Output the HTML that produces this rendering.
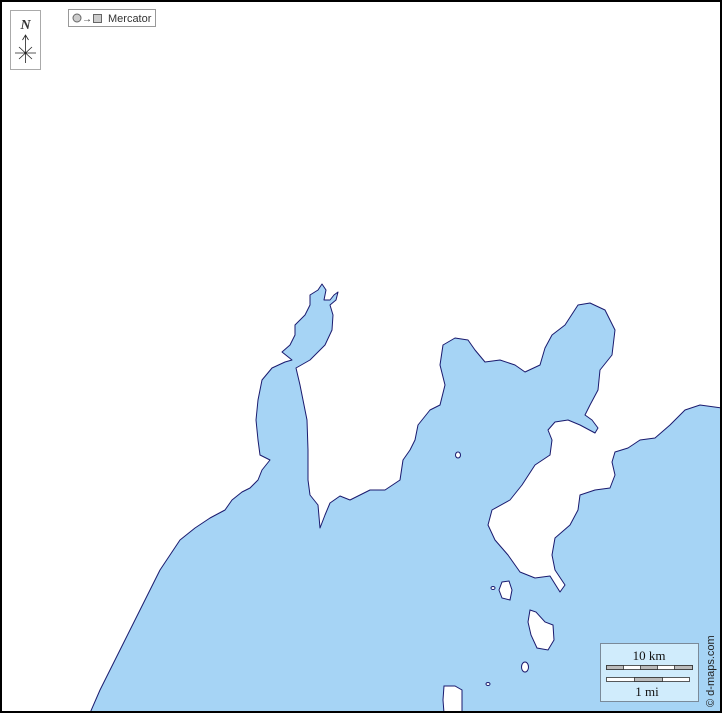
<!DOCTYPE html>
<html><head><style>
html,body{margin:0;padding:0;background:#fff}
#m{position:relative;width:718px;height:709px;border:2px solid #000;overflow:hidden}
svg{position:absolute;left:-2px;top:-2px}
.t{font-family:"Liberation Sans",sans-serif}
</style></head><body><div id="m">
<svg width="722" height="713" viewBox="0 0 722 713">
<path fill="#a6d4f5" stroke="#1a1a6e" stroke-width="1" stroke-linejoin="round" d="M90,713 L100,690 L115,660 L125,640 L135,620 L150,590 L160,570 L170,555 L180,540 L195,528 L210,518 L225,510 L232,500 L242,492 L250,488 L258,480 L262,470 L270,460 L260,455 L258,440 L256,420 L258,400 L262,380 L272,368 L285,362 L292,360 L282,352 L290,345 L295,335 L295,325 L305,315 L310,305 L310,295 L318,290 L322,284 L326,290 L324,300 L330,300 L334,295 L338,292 L336,300 L330,305 L333,315 L332,330 L325,345 L310,360 L296,368 L300,385 L303,400 L307,420 L308,450 L308,480 L310,495 L318,505 L320,528 L325,515 L330,503 L340,496 L350,500 L360,495 L370,490 L385,490 L400,480 L403,460 L410,450 L415,440 L418,425 L430,410 L440,405 L445,385 L440,365 L443,345 L455,338 L468,340 L475,350 L485,362 L500,360 L515,365 L525,372 L540,365 L545,348 L552,335 L565,325 L578,305 L590,303 L605,310 L615,330 L612,355 L600,370 L598,390 L590,405 L585,415 L592,420 L598,428 L595,433 L580,425 L568,420 L555,422 L548,430 L552,440 L550,455 L535,465 L522,485 L510,500 L492,510 L488,525 L495,540 L508,555 L520,572 L535,578 L550,576 L560,592 L565,585 L555,570 L552,555 L555,538 L570,525 L578,510 L580,495 L595,490 L610,488 L615,475 L612,462 L615,452 L628,448 L640,440 L655,438 L670,425 L685,410 L700,405 L722,408 L722,713 Z"/>
<g fill="#fff" stroke="#1a1a6e" stroke-width="1">
<ellipse cx="458" cy="455" rx="2.5" ry="3"/>
<path d="M502,582 L509,581 L512,590 L510,600 L502,598 L499,590 Z"/>
<path d="M530,610 L536,612 L545,622 L553,625 L554,640 L548,650 L537,648 L531,635 L528,622 Z"/>
<path d="M444,686 L455,686 L462,690 L462,713 L444,713 L443,700 Z"/>
<ellipse cx="525" cy="667" rx="3.5" ry="5"/>
<ellipse cx="493" cy="588" rx="2" ry="1.5"/>
<ellipse cx="488" cy="684" rx="2" ry="1.5"/>
</g>
<rect x="10.5" y="10.5" width="30" height="59" fill="#fff" stroke="#aaa"/>
<text x="25.5" y="29" text-anchor="middle" font-family="Liberation Serif" font-style="italic" font-weight="bold" font-size="14" fill="#333">N</text>
<path d="M25.5,36 V63 M22.5,40 L25.5,35 L28.5,40 M15,53 H36 M19,47 L32,59 M32,47 L19,59" stroke="#222" stroke-width="0.8" fill="none"/>
<rect x="68.5" y="9.5" width="87" height="17" fill="#fff" stroke="#999"/>
<circle cx="77" cy="18" r="4" fill="#ccc" stroke="#666"/>
<text x="82" y="22" font-family="Liberation Sans" font-size="10" fill="#333">→</text>
<rect x="93.5" y="14.5" width="8" height="8" fill="#ccc" stroke="#666"/>
<text x="108" y="22" class="t" font-size="11" fill="#333">Mercator</text>
<rect x="600.5" y="643.5" width="98" height="58" fill="#d0ecfc" stroke="#7a8a99"/>
<text x="649" y="660" text-anchor="middle" font-family="Liberation Serif" font-size="13" fill="#111">10 km</text>
<rect x="606.5" y="665.5" width="86" height="4" fill="#fff" stroke="#333" stroke-width="0.8"/>
<rect x="606.5" y="665.5" width="17" height="4" fill="#bbb" stroke="#333" stroke-width="0.8"/>
<rect x="640.5" y="665.5" width="17" height="4" fill="#bbb" stroke="#333" stroke-width="0.8"/>
<rect x="674.5" y="665.5" width="18" height="4" fill="#bbb" stroke="#333" stroke-width="0.8"/>
<rect x="606.5" y="677.5" width="83" height="4" fill="#fff" stroke="#333" stroke-width="0.8"/>
<rect x="634.5" y="677.5" width="28" height="4" fill="#bbb" stroke="#333" stroke-width="0.8"/>
<text x="647" y="696" text-anchor="middle" font-family="Liberation Serif" font-size="13" fill="#111">1 mi</text>
<text transform="translate(714,707) rotate(-90)" class="t" font-size="11" fill="#222">© d-maps.com</text>
</svg>
</div></body></html>
